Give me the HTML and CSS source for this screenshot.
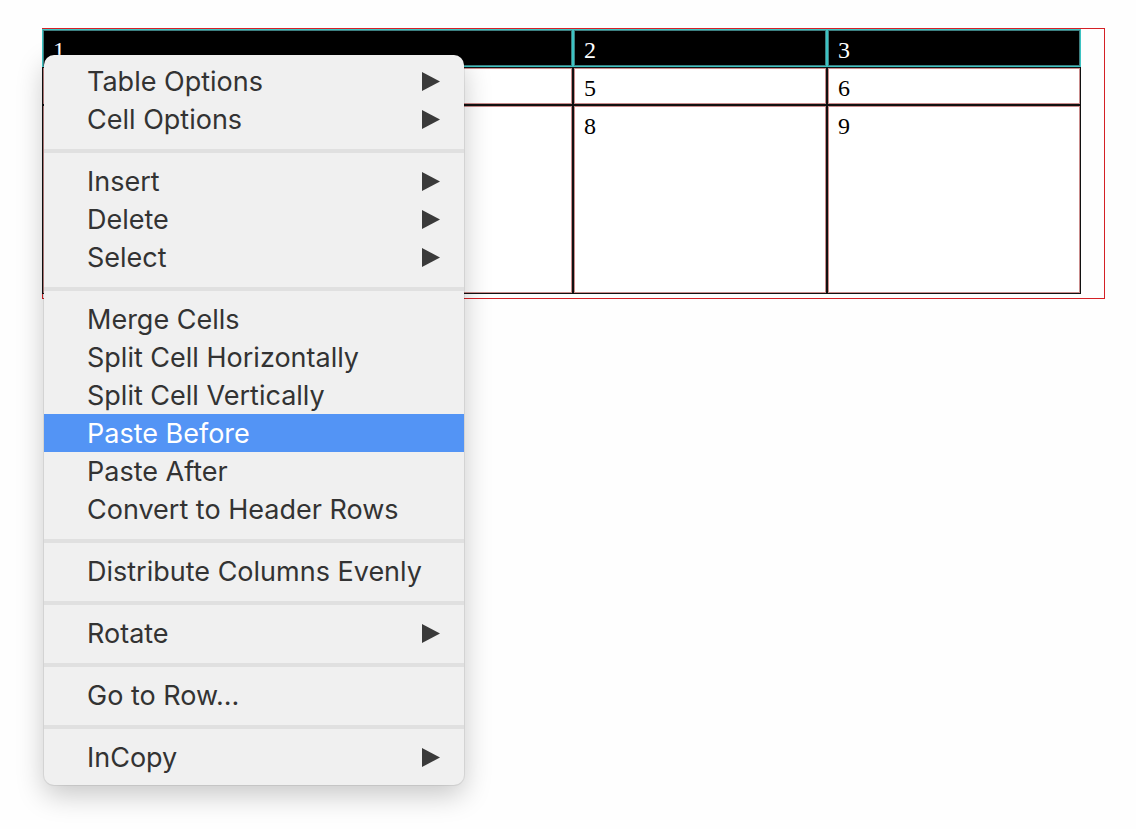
FILE: index.html
```html
<!DOCTYPE html>
<html>
<head>
<meta charset="utf-8">
<link rel="stylesheet" href="styles.css">
</head>
<body>
<div class="canvas">
  <div class="frame">
    <div class="tbl">
      <div class="cell head">1</div>
      <div class="cell head">2</div>
      <div class="cell head">3</div>
      <div class="cell">4</div>
      <div class="cell">5</div>
      <div class="cell">6</div>
      <div class="cell">7</div>
      <div class="cell">8</div>
      <div class="cell">9</div>
    </div>
  </div>

  <div class="menu">
    <div class="item"><span>Table Options</span><svg class="arrow" viewBox="0 0 18 19"><polygon points="0,0 18,9.5 0,19"/></svg></div>
    <div class="item"><span>Cell Options</span><svg class="arrow" viewBox="0 0 18 19"><polygon points="0,0 18,9.5 0,19"/></svg></div>
    <div class="sep"></div>
    <div class="item"><span>Insert</span><svg class="arrow" viewBox="0 0 18 19"><polygon points="0,0 18,9.5 0,19"/></svg></div>
    <div class="item"><span>Delete</span><svg class="arrow" viewBox="0 0 18 19"><polygon points="0,0 18,9.5 0,19"/></svg></div>
    <div class="item"><span>Select</span><svg class="arrow" viewBox="0 0 18 19"><polygon points="0,0 18,9.5 0,19"/></svg></div>
    <div class="sep"></div>
    <div class="item"><span>Merge Cells</span></div>
    <div class="item"><span>Split Cell Horizontally</span></div>
    <div class="item"><span>Split Cell Vertically</span></div>
    <div class="item active"><span>Paste Before</span></div>
    <div class="item"><span>Paste After</span></div>
    <div class="item"><span>Convert to Header Rows</span></div>
    <div class="sep"></div>
    <div class="item"><span>Distribute Columns Evenly</span></div>
    <div class="sep"></div>
    <div class="item"><span>Rotate</span><svg class="arrow" viewBox="0 0 18 19"><polygon points="0,0 18,9.5 0,19"/></svg></div>
    <div class="sep"></div>
    <div class="item"><span>Go to Row...</span></div>
    <div class="sep"></div>
    <div class="item"><span>InCopy</span><svg class="arrow" viewBox="0 0 18 19"><polygon points="0,0 18,9.5 0,19"/></svg></div>
  </div>
</div>
</body>
</html>
```

FILE: styles.css
```css
html, body {
  margin: 0;
  padding: 0;
  background: #fefefe;
}

.canvas {
  position: relative;
  width: 1136px;
  height: 829px;
  padding: 28px 0 0 42px;
  box-sizing: border-box;
}

.frame {
  width: 1063px;
  height: 271px;
  box-sizing: border-box;
  border: 1px solid #d42026;
}

.tbl {
  margin-left: -1px;
  width: 1039px;
  display: grid;
  grid-template-columns: 531px 254px 254px;
  grid-template-rows: 38px 38px 189px;
}

.cell {
  box-sizing: border-box;
  border: 1px solid #111;
  box-shadow: inset 0 0 0 1px #c98c8c;
  background: #fff;
  color: #000;
  font-family: "Liberation Serif", "Times New Roman", serif;
  font-size: 24px;
  line-height: 26px;
  padding: 7px 0 0 10px;
}

.cell.head {
  background: #000;
  color: #fff;
  border: 1px solid #3cc3c3;
  box-shadow: inset 0 0 0 1px #3d7f80;
}

.menu {
  position: absolute;
  left: 44px;
  top: 55px;
  width: 420px;
  height: 730px;
  box-sizing: border-box;
  padding: 7px 0 9px;
  background: #f0f0f0;
  border-radius: 10px;
  box-shadow: 0 0 0 1px rgba(0, 0, 0, 0.07), 0 10px 28px rgba(0, 0, 0, 0.22);
  font-family: "Inter", "Helvetica Neue", Arial, sans-serif;
  font-size: 27px;
  color: #333333;
}

.item {
  height: 38px;
  display: flex;
  align-items: center;
  justify-content: space-between;
  padding: 0 24px 0 43px;
}

.item.active {
  background: #5394f5;
  color: #ffffff;
}

.arrow {
  width: 18px;
  height: 19px;
  fill: #3a3a3a;
}

.sep {
  height: 4px;
  margin: 11px 0 9px;
  background: #e0e0e0;
}
```
